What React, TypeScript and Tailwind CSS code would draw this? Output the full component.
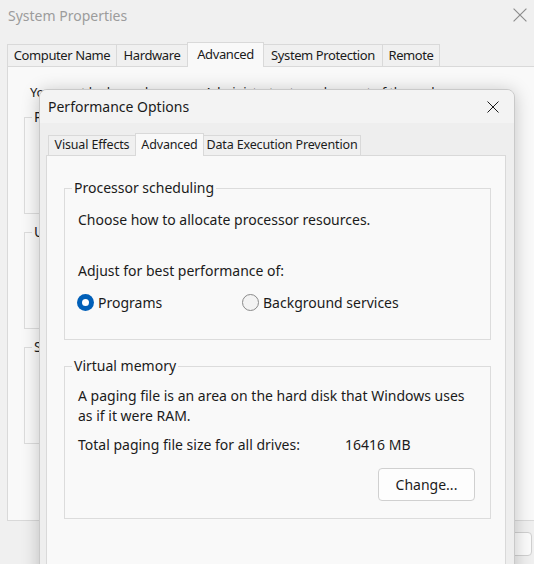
import React from "react";

const font = { fontFamily: '"Noto Sans", "Open Sans", sans-serif' };

function CloseGlyph({ className }: { className?: string }) {
  return (
    <svg viewBox="0 0 12 12" className={className} fill="none">
      <path d="M0.5 0.5 L11.5 11.5 M11.5 0.5 L0.5 11.5" stroke="currentColor" strokeWidth="1" />
    </svg>
  );
}

function Radio({ checked, label }: { checked?: boolean; label: string }) {
  return (
    <label className="flex items-center gap-[4px] h-[20px]">
      {checked ? (
        <span className="w-[17px] h-[17px] rounded-full bg-[#005fb8] flex items-center justify-center">
          <span className="w-[7px] h-[7px] rounded-full bg-white" />
        </span>
      ) : (
        <span className="w-[17px] h-[17px] rounded-full border border-[#8a8a8a] bg-[#f3f3f3]" />
      )}
      <span>{label}</span>
    </label>
  );
}

function OuterGroup({ title, children }: { title: string; children?: React.ReactNode }) {
  return (
    <fieldset className="border border-[#dcdcdc] h-[107px] w-[480px] ml-[16px]">
      <legend className="ml-[7px] px-[2px] leading-[20px]">{title}</legend>
      {children}
    </fieldset>
  );
}

const sysTabs = [
  { label: "Computer Name", w: "w-[110px]" },
  { label: "Hardware", w: "w-[70px]" },
  { label: "Advanced", w: "w-[77px]" },
  { label: "System Protection", w: "w-[119px]" },
  { label: "Remote", w: "w-[57px]" },
];

const perfTabs = [
  { label: "Visual Effects", w: "w-[87px]" },
  { label: "Advanced", w: "w-[69px]" },
  { label: "Data Execution Prevention", w: "w-[157px]" },
];

export default function App() {
  return (
    <div
      className="relative w-[534px] h-[564px] overflow-hidden bg-[#f0f0f0] text-[14px] text-[#1b1b1b]"
      style={font}
    >
      {/* System Properties (inactive, behind) */}
      <div className="h-[30px] flex items-center justify-between pl-[8px] pr-[7px]">
        <span className="text-[14px] text-[#9c9c9c]">System Properties</span>
        <CloseGlyph className="w-[14px] h-[14px] text-[#8c8c8c]" />
      </div>
      <div className="pl-[7px] pt-[12px]">
        <div className="flex items-end h-[24px]">
          {sysTabs.map((t, i) =>
            t.label === "Advanced" ? (
              <div
                key={t.label}
                className={`${t.w} relative z-10 h-[25px] -mb-px flex items-center justify-center bg-[#f9f9f9] border border-b-0 border-[#d9d9d9] text-[13px] tracking-[-0.4px]`}
              >
                {t.label}
              </div>
            ) : (
              <div
                key={t.label}
                className={`${t.w} h-[22px] flex items-center justify-center border border-b-0 ${i === 0 ? "" : "border-l-0"} ${i === 1 ? "border-r-0" : ""} border-[#d9d9d9] bg-[#f0f0f0] text-[13px] tracking-[-0.4px]`}
              >
                {t.label}
              </div>
            )
          )}
        </div>
        <div className="w-[540px] h-[455px] bg-[#f9f9f9] border border-[#d9d9d9] pt-[15px]">
          <p className="pl-[22px] leading-[20px] text-[13px] tracking-[-0.2px]">
            You must be logged on as an Administrator to make most of these changes.
          </p>
          <div className="flex flex-col gap-[8px] mt-[5px]">
            <OuterGroup title="Performance" />
            <OuterGroup title="User Profiles" />
            <OuterGroup title="Startup and Recovery" />
          </div>
        </div>
        <div className="flex justify-end gap-[8px] mt-[11px] pr-[2px]">
          <div className="w-[80px] h-[24px] rounded-[4px] border border-[#d0d0d0] bg-[#fbfbfb]" />
          <div className="w-[80px] h-[24px] rounded-[4px] border border-[#d0d0d0] bg-[#fbfbfb]" />
          <div className="w-[80px] h-[24px] rounded-[4px] border border-[#d0d0d0] bg-[#fbfbfb]" />
        </div>
      </div>

      {/* Performance Options (active dialog) */}
      <div className="absolute left-[39px] top-[89px] w-[476px] h-[520px] rounded-t-[8px] border border-[#c9c9c9] bg-[#eeeeee] shadow-[0_2px_18px_rgba(0,0,0,0.22)] overflow-hidden">
        <div className="h-[33px] bg-[#f3f3f3] flex items-center justify-between pl-[8px] pr-[15px]">
          <span className="text-[14px] text-[#1a1a1a]">Performance Options</span>
          <CloseGlyph className="w-[12px] h-[12px] text-[#1a1a1a]" />
        </div>
        <div className="pl-[6px] pr-[8px] pt-[10px]">
          <div className="flex items-end h-[22px] ml-[2px]">
            {perfTabs.map((t, i) =>
              t.label === "Advanced" ? (
                <div
                  key={t.label}
                  className={`${t.w} relative z-10 h-[23px] -mb-px flex items-center justify-center bg-[#f9f9f9] border border-b-0 border-[#d9d9d9] text-[12.5px] tracking-[-0.15px]`}
                >
                  {t.label}
                </div>
              ) : (
                <div
                  key={t.label}
                  className={`${t.w} h-[20px] flex items-center justify-center border border-b-0 ${i === 0 ? "border-r-0" : "border-l-0"} border-[#d9d9d9] bg-[#f0f0f0] text-[12.5px] tracking-[-0.15px]`}
                >
                  {t.label}
                </div>
              )
            )}
          </div>
          <div className="h-[420px] bg-[#f9f9f9] border border-[#d9d9d9] pl-[17px] pr-[14px] pt-[22px]">
            <fieldset className="border border-[#dcdcdc] pb-[27px]">
              <legend className="ml-[7px] px-[2px] leading-[20px]">Processor scheduling</legend>
              <p className="pl-[13px] mt-[12px] leading-[20px]">Choose how to allocate processor resources.</p>
              <p className="pl-[13px] mt-[31px] leading-[20px]">Adjust for best performance of:</p>
              <div className="pl-[12px] mt-[11px] flex">
                <div className="w-[165px]">
                  <Radio checked label="Programs" />
                </div>
                <Radio label="Background services" />
              </div>
            </fieldset>
            <fieldset className="border border-[#dcdcdc] mt-[16px] pb-[17px]">
              <legend className="ml-[7px] px-[2px] leading-[20px]">Virtual memory</legend>
              <p className="pl-[13px] mt-[10px] leading-[20px]">
                A paging file is an area on the hard disk that Windows uses
                <br />
                as if it were RAM.
              </p>
              <div className="pl-[13px] mt-[9px] flex leading-[20px]">
                <span className="w-[267px]">Total paging file size for all drives:</span>
                <span>16416 MB</span>
              </div>
              <div className="flex justify-end mt-[13px] pr-[15px]">
                <button className="w-[97px] h-[33px] rounded-[4px] border border-[#d0d0d0] bg-[#fdfdfd] leading-[20px]">
                  Change...
                </button>
              </div>
            </fieldset>
          </div>
        </div>
      </div>
    </div>
  );
}
